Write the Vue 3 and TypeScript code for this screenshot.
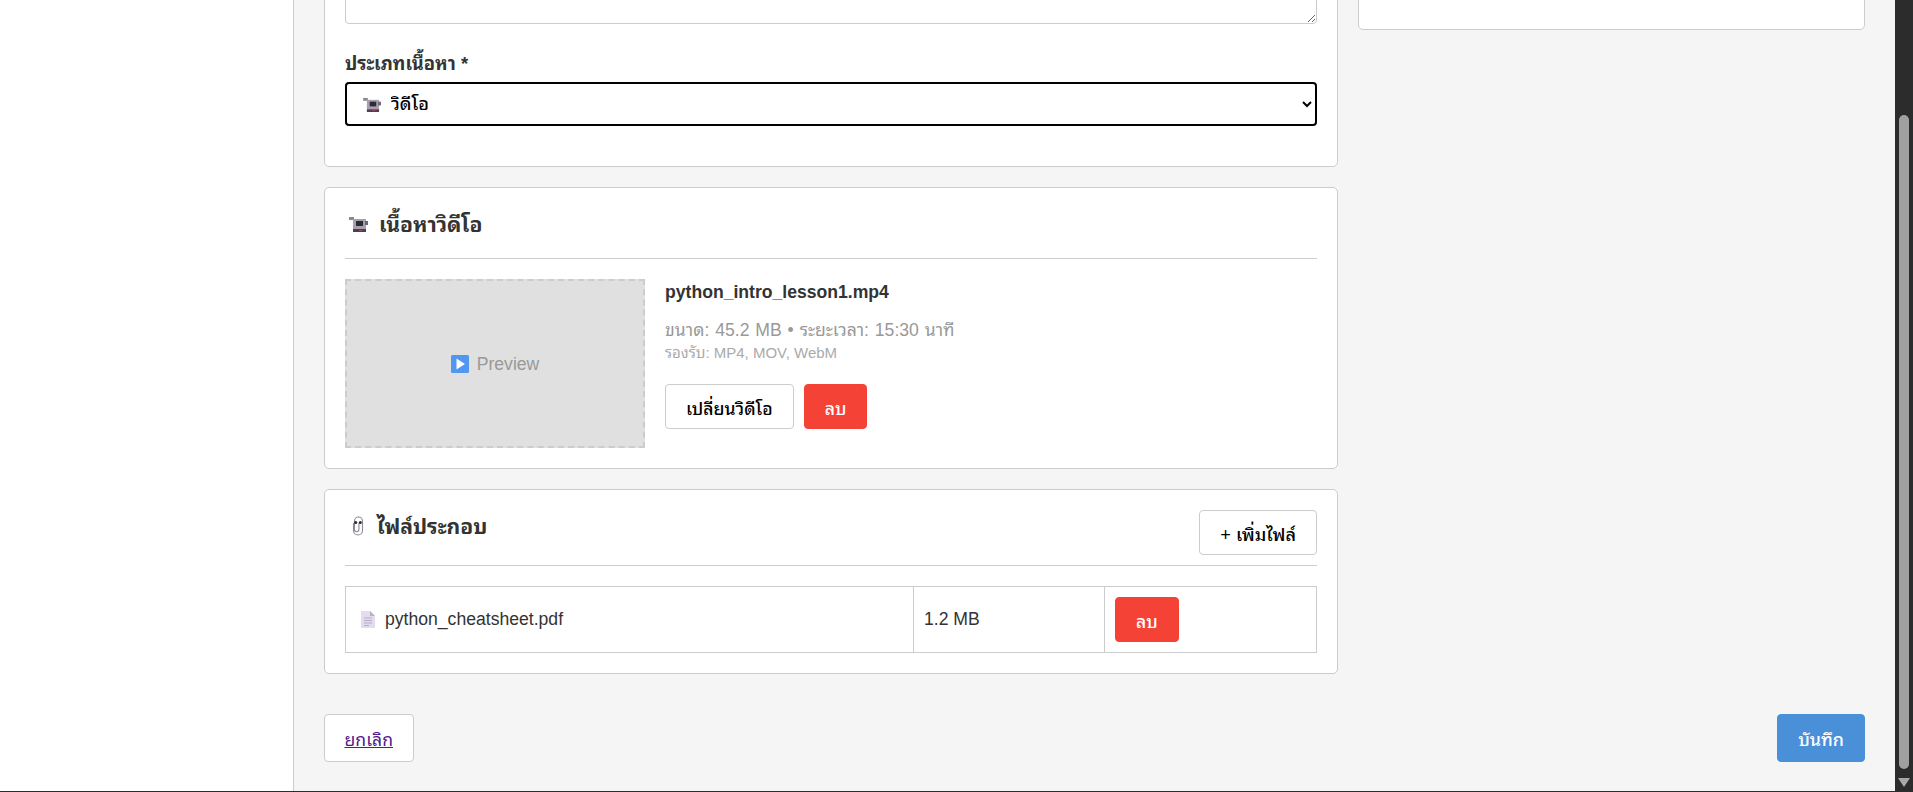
<script setup lang="ts">
interface Attachment {
  name: string
  size: string
}
const attachments: Attachment[] = [{ name: 'python_cheatsheet.pdf', size: '1.2 MB' }]
</script>

<template>
  <div class="page">
    <aside class="sidebar"></aside>
    <main class="main">
      <div class="grid">
        <div class="left">
          <section class="card">
            <div class="group first">
              <textarea class="textarea"></textarea>
            </div>
            <div class="group">
              <label class="label">ประเภทเนื้อหา *</label>
              <div class="select-wrap">
                <select class="select">
                  <option>วิดีโอ</option>
                </select>
                <svg class="select-icon" viewBox="0 0 20 16">
                  <rect x="0" y="1" width="5" height="3" fill="#8d8794" />
                  <rect x="4" y="3" width="13" height="10" fill="#a7a1ad" />
                  <rect x="7" y="5" width="7" height="5" fill="#2f2a38" />
                  <rect x="16" y="5" width="3" height="4" fill="#6c6674" />
                  <rect x="4" y="13" width="13" height="3" fill="#4d3f5c" />
                  <rect x="10" y="14" width="3" height="1" fill="#c23b4b" />
                </svg>
              </div>
            </div>
          </section>

          <section class="card">
            <header class="card-head">
              <h3 class="title">
                <svg class="title-icon" viewBox="0 0 20 16">
                  <rect x="0" y="1" width="5" height="3" fill="#8d8794" />
                  <rect x="4" y="3" width="13" height="10" fill="#a7a1ad" />
                  <rect x="7" y="5" width="7" height="5" fill="#2f2a38" />
                  <rect x="16" y="5" width="3" height="4" fill="#6c6674" />
                  <rect x="4" y="13" width="13" height="3" fill="#4d3f5c" />
                  <rect x="10" y="14" width="3" height="1" fill="#c23b4b" />
                </svg>
                เนื้อหาวิดีโอ
              </h3>
            </header>
            <div class="video">
              <div class="preview">
                <svg class="play" viewBox="0 0 18 18">
                  <rect width="18" height="18" rx="1.5" fill="#4f97f0" />
                  <path d="M5.5 3.5 14 9l-8.5 5.5z" fill="#fff" />
                </svg>
                <span>Preview</span>
              </div>
              <div class="info">
                <div class="file-name">python_intro_lesson1.mp4</div>
                <div class="meta">ขนาด: 45.2 MB • ระยะเวลา: 15:30 นาที</div>
                <div class="support">รองรับ: MP4, MOV, WebM</div>
                <div class="buttons">
                  <button class="btn">เปลี่ยนวิดีโอ</button>
                  <button class="btn danger">ลบ</button>
                </div>
              </div>
            </div>
          </section>

          <section class="card">
            <header class="card-head split">
              <h3 class="title">
                <svg class="clip-icon" viewBox="0 0 12 20">
                  <path d="M1.5 7v7.5a4.500 4.500 0 0 0 9 0V5a4 4 0 0 0-8 0v8.500a2.200 2.200 0 0 0 4.400 0V7" fill="none" stroke="#8a8a92" stroke-width="1.100" />
                  <circle cx="3.700" cy="6.500" r="1.500" fill="#2a2a30" />
                  <circle cx="8.300" cy="6.500" r="1.500" fill="#2a2a30" />
                </svg>
                ไฟล์ประกอบ
              </h3>
              <button class="btn add">+ เพิ่มไฟล์</button>
            </header>
            <table class="table">
              <tbody>
                <tr v-for="file in attachments" :key="file.name">
                  <td class="c-name">
                    <span class="file-cell">
                      <svg class="doc" viewBox="0 0 14 17">
                        <path d="M0 0h9l5 5v12H0z" fill="#e4dcee" />
                        <path d="M9 0l5 5H9z" fill="#b9b0c4" />
                        <path d="M3 7h8M3 9.500h8M3 12h8M3 14.500h5" stroke="#b5abc2" stroke-width="1" />
                      </svg>
                      {{ file.name }}
                    </span>
                  </td>
                  <td class="c-size">{{ file.size }}</td>
                  <td><button class="btn danger">ลบ</button></td>
                </tr>
              </tbody>
            </table>
          </section>
        </div>
        <div class="right">
          <section class="card side"></section>
        </div>
      </div>
      <footer class="actions">
        <a href="#" class="cancel">ยกเลิก</a>
        <button class="btn primary">บันทึก</button>
      </footer>
    </main>
    <div class="scrollbar">
      <div class="thumb"></div>
      <div class="arrow"></div>
    </div>
  </div>
</template>

<style>
html, body { margin: 0; height: 100%; overflow: hidden; }
</style>

<style scoped>
.page {
  display: flex;
  height: 791px;
  border-bottom: 1px solid #2c2c2c;
  overflow: hidden;
  background: #f5f5f5;
  font-family: "Liberation Sans", Arial, "Noto Sans Thai Looped", Loma, Tahoma, "Noto Sans", sans-serif;
  font-size: 17.6px;
  color: #333;
}
.sidebar {
  flex: 0 0 293px;
  background: #fff;
  border-right: 1px solid #ccc;
}
.main {
  flex: 1;
  min-width: 0;
  display: flex;
  flex-direction: column;
  justify-content: flex-end;
  padding: 0 30px 29px;
}
.grid {
  display: grid;
  grid-template-columns: 1014px 507px;
  gap: 20px;
  align-items: start;
}
.card {
  background: #fff;
  border: 1px solid #ccc;
  border-radius: 5px;
  padding: 20px;
  margin-bottom: 20px;
}
.side { height: 125px; padding: 0; }
.right { align-self: start; }
.group { margin-bottom: 20px; }
.first { margin-bottom: 26px; }
.textarea {
  display: block;
  width: 100%;
  height: 100px;
  box-sizing: border-box;
  border: 1px solid #ccc;
  border-radius: 4px;
  background: #fff;
}
.label {
  display: block;
  font-size: 18.4px;
  font-weight: 700;
  margin: 0 0 5px;
  line-height: 27px;
}
.select-wrap { position: relative; }
.select {
  display: block;
  width: 100%;
  height: 44px;
  box-sizing: border-box;
  padding: 0 0 0 40px;
  border: 2px solid #000;
  border-radius: 4px;
  background: #fff;
  color: #000;
  font-family: inherit;
  font-size: 18px;
  font-weight: 500;
}
.select-icon {
  position: absolute;
  left: 18px;
  top: 15px;
  width: 19px;
  height: 15px;
}
.card-head {
  border-bottom: 1px solid #ccc;
  padding-bottom: 10px;
  margin-bottom: 20px;
}
.split {
  display: flex;
  justify-content: space-between;
  align-items: flex-start;
}
.title {
  margin: 0 0 10px;
  height: 30px;
  box-sizing: border-box;
  padding-bottom: 2px;
  display: flex;
  align-items: center;
  font-size: 21.12px;
  font-weight: 700;
  color: #333;
}
.title-icon {
  width: 20px;
  height: 16px;
  margin: 4px 10px 0 4px;
}
.clip-icon {
  width: 12px;
  height: 20px;
  margin: 4px 13px 0 7px;
}
.video {
  display: flex;
  gap: 20px;
}
.preview {
  flex: 0 0 300px;
  height: 169px;
  box-sizing: border-box;
  border: 2px dashed #ccc;
  background: #e0e0e0;
  color: #999;
  display: flex;
  align-items: center;
  justify-content: center;
  gap: 8px;
  padding-top: 1px;
}
.play { width: 18px; height: 18px; }
.file-name {
  font-weight: 700;
  line-height: 18px;
  margin-top: 4px;
  color: #333;
}
.meta {
  color: #999;
  margin-top: 19px;
  line-height: 20px;
  word-spacing: 1px;
}
.support {
  color: #aaa;
  font-size: 15px;
  line-height: 18px;
  margin-top: 4px;
}
.buttons {
  display: flex;
  gap: 10px;
  margin-top: 22px;
}
.btn {
  height: 45px;
  padding: 0 20px;
  background: #fff;
  border: 1px solid #ccc;
  border-radius: 4px;
  color: #000;
  font-family: inherit;
  font-size: 17.6px;
  font-weight: 500;
  flex: none;
}
.add { font-size: 18.1px; }
.danger {
  background: #f44336;
  border-color: #f44336;
  color: #fff;
}
.primary {
  background: #4a90d9;
  border-color: #4a90d9;
  color: #fff;
  height: 48px;
  font-size: 17.8px;
}
.table {
  width: 100%;
  border-collapse: collapse;
  table-layout: fixed;
}
.table td {
  border: 1px solid #ccc;
  padding: 10px;
}
.c-name { width: 547px; }
.c-size { width: 170px; }
.file-cell {
  display: flex;
  align-items: center;
}
.doc {
  width: 14px;
  height: 17px;
  margin: 0 10px 0 5px;
}
.actions {
  display: flex;
  justify-content: space-between;
  margin-top: 20px;
}
.cancel {
  display: flex;
  align-items: center;
  height: 48px;
  box-sizing: border-box;
  padding: 0 19.5px;
  background: #fff;
  border: 1px solid #ccc;
  border-radius: 4px;
  color: #551a8b;
}
.scrollbar {
  flex: 0 0 18px;
  position: relative;
  background: #2c2c2c;
}
.thumb {
  position: absolute;
  left: 4px;
  width: 10px;
  top: 115px;
  height: 654px;
  background: #a0a0a0;
  border-radius: 5px;
}
.arrow {
  position: absolute;
  left: 3px;
  top: 778px;
  width: 0;
  height: 0;
  border-left: 6px solid transparent;
  border-right: 6px solid transparent;
  border-top: 9px solid #a8a8a8;
}
</style>
